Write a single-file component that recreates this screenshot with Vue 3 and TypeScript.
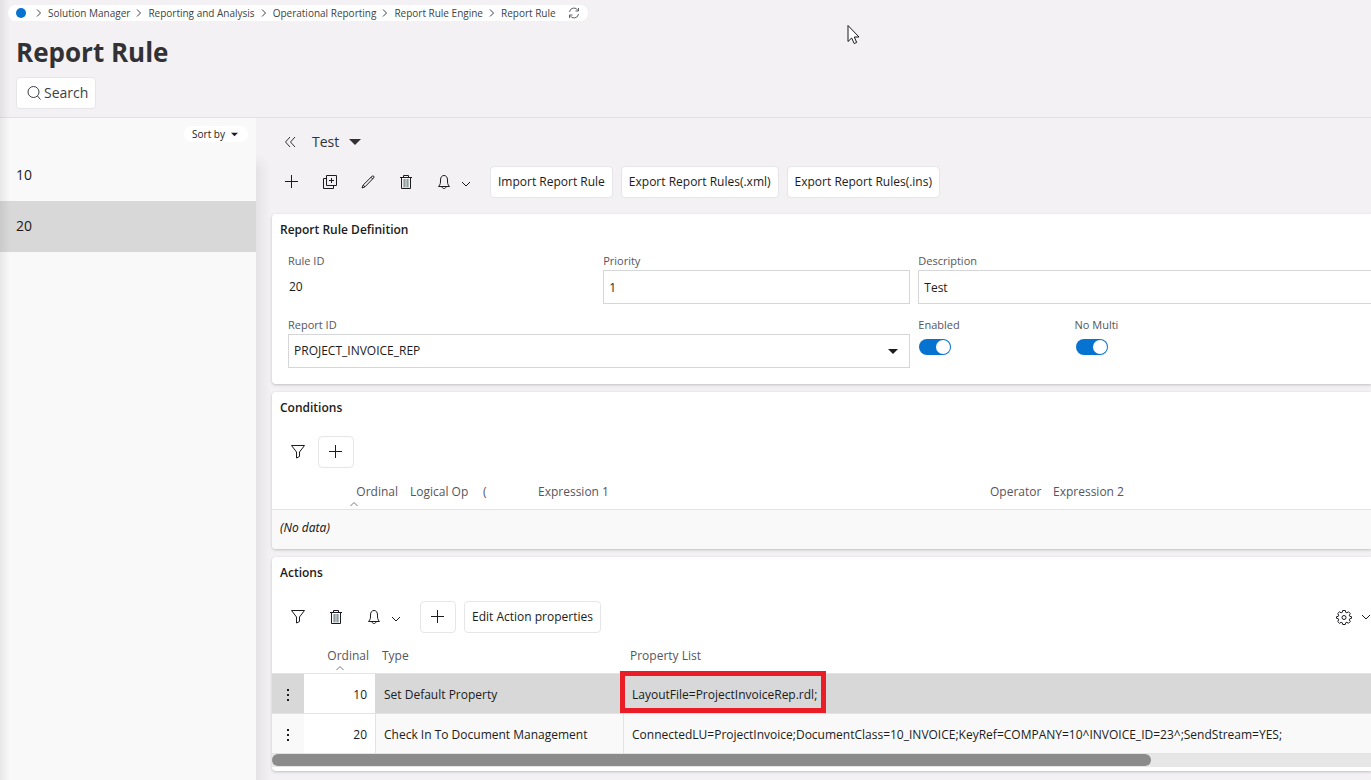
<script setup lang="ts">
import { ref } from 'vue'

interface ActionRow {
  ordinal: number
  type: string
  properties: string
}

const crumbs = ['Solution Manager', 'Reporting and Analysis', 'Operational Reporting', 'Report Rule Engine', 'Report Rule']
const rules = [10, 20]
const selectedRule = ref(20)
const priority = ref('1')
const description = ref('Test')
const reportId = ref('PROJECT_INVOICE_REP')
const enabled = ref(true)
const noMulti = ref(true)

const actions: ActionRow[] = [
  { ordinal: 10, type: 'Set Default Property', properties: 'LayoutFile=ProjectInvoiceRep.rdl;' },
  {
    ordinal: 20,
    type: 'Check In To Document Management',
    properties: 'ConnectedLU=ProjectInvoice;DocumentClass=10_INVOICE;KeyRef=COMPANY=10^INVOICE_ID=23^;SendStream=YES;',
  },
]
const selectedAction = ref(10)
</script>

<template>
  <div class="page">
    <svg class="defs" aria-hidden="true">
      <symbol id="i-plus" viewBox="0 0 16 16"><path d="M7.500 1v13M1 7.500h13" /></symbol>
      <symbol id="i-trash" viewBox="0 0 16 16">
        <path d="M5 5h6v8.500H5z" class="fillsoft" />
        <path d="M2 3.500h12M5.500 3.500v-2h5v2M3.500 3.500v11h9v-11" />
        <path d="M6.500 5v8M9.500 5v8" class="soft" />
      </symbol>
      <symbol id="i-bell" viewBox="0 0 16 16">
        <path d="M2.500 12.500C4.500 10.500 4.500 9 4.500 6 4.500 3 6 1.500 8 1.500s3.500 1.500 3.500 4.500c0 3 0 4.500 2 6.500zM6 12.500c0 2.700 4 2.700 4 0" />
      </symbol>
      <symbol id="i-filter" viewBox="0 0 16 16"><path d="M1.500 1.500h13L9.500 8v4.500l-3 1.500V8z" /></symbol>
      <symbol id="i-down" viewBox="0 0 10 10"><path d="M1 3l4 4 4-4" /></symbol>
      <symbol id="i-right" viewBox="0 0 10 10"><path d="M3 1.500L6.500 5 3 8.500" /></symbol>
      <symbol id="i-up" viewBox="0 0 10 10"><path d="M1.500 7L5 3.500 8.500 7" /></symbol>
      <symbol id="i-caret" viewBox="0 0 12 6"><path d="M0 0h12L6 6z" class="solid" /></symbol>
    </svg>

    <header class="head">
      <nav class="crumbs" aria-label="Breadcrumb">
        <a class="home" href="#" aria-label="Home"></a>
        <template v-for="crumb in crumbs" :key="crumb">
          <svg class="sep"><use href="#i-right" /></svg>
          <a href="#">{{ crumb }}</a>
        </template>
        <button class="refresh" type="button" aria-label="Refresh">
          <svg viewBox="0 0 12 12">
            <path d="M1.500 5A4.500 4.500 0 0 1 10 3.500M10.500 1v3H7.500M10.500 7A4.500 4.500 0 0 1 2 8.500M1.500 11V8h3" />
          </svg>
        </button>
      </nav>
      <h1>Report Rule</h1>
      <button class="btn search" type="button">
        <svg viewBox="0 0 16 16"><circle cx="7.500" cy="7" r="5.500" /><path d="M11.500 11l3 3.500" /></svg>
        Search
      </button>
    </header>

    <div class="body">
      <aside class="side">
        <div class="sortbar">
          <button class="sort" type="button">Sort by <svg><use href="#i-caret" /></svg></button>
        </div>
        <button
          v-for="rule in rules"
          :key="rule"
          type="button"
          class="rule"
          :class="{ active: rule === selectedRule }"
          @click="selectedRule = rule"
        >
          {{ rule }}
        </button>
      </aside>

      <main class="content">
        <div class="record">
          <button class="collapse" type="button" aria-label="Collapse list">
            <svg viewBox="0 0 12 12"><path d="M6 1L1.500 6 6 11M11 1L6.500 6 11 11" /></svg>
          </button>
          <button class="current" type="button">Test <svg><use href="#i-caret" /></svg></button>
        </div>

        <div class="tools top">
          <button class="icon" type="button" aria-label="New"><svg><use href="#i-plus" /></svg></button>
          <button class="icon" type="button" aria-label="Duplicate">
            <svg viewBox="0 0 16 16"><path d="M4.500 1.500h10v10h-10zM4.500 4.500h-3v10h10v-3M9.500 4v5M7 6.500h5" /></svg>
          </button>
          <button class="icon" type="button" aria-label="Edit">
            <svg viewBox="0 0 16 16"><path d="M2 14l1.200-3L12 2.300q1-.8 1.700-.1t-.1 1.700L5 12.800zM11 3.300l1.700 1.700M3.200 11l1.800 1.800" /></svg>
          </button>
          <button class="icon" type="button" aria-label="Delete"><svg><use href="#i-trash" /></svg></button>
          <button class="icon wide" type="button" aria-label="Notifications">
            <svg><use href="#i-bell" /></svg><svg class="chev"><use href="#i-down" /></svg>
          </button>
          <button class="btn" type="button">Import Report Rule</button>
          <button class="btn" type="button">Export Report Rules(.xml)</button>
          <button class="btn" type="button">Export Report Rules(.ins)</button>
        </div>

        <section class="panel">
          <h2>Report Rule Definition</h2>
          <div class="fields">
            <div class="field">
              <span class="label">Rule ID</span>
              <output class="static">20</output>
            </div>
            <div class="field">
              <label for="priority">Priority</label>
              <input id="priority" v-model="priority" type="text" class="box" />
            </div>
            <div class="field">
              <label for="description">Description</label>
              <input id="description" v-model="description" type="text" class="box" />
            </div>
            <div class="field span">
              <label for="report">Report ID</label>
              <div class="selectwrap">
                <select id="report" v-model="reportId" class="box">
                  <option>PROJECT_INVOICE_REP</option>
                </select>
                <svg><use href="#i-caret" /></svg>
              </div>
            </div>
            <div class="toggles">
              <div class="field">
                <label for="enabled">Enabled</label>
                <input id="enabled" v-model="enabled" type="checkbox" class="toggle" />
              </div>
              <div class="field">
                <label for="multi">No Multi</label>
                <input id="multi" v-model="noMulti" type="checkbox" class="toggle" />
              </div>
            </div>
          </div>
        </section>

        <section class="panel">
          <h2>Conditions</h2>
          <div class="tools inner">
            <button class="icon" type="button" aria-label="Filter"><svg><use href="#i-filter" /></svg></button>
            <button class="btn square" type="button" aria-label="Add condition"><svg><use href="#i-plus" /></svg></button>
          </div>
          <table class="conditions">
            <colgroup>
              <col class="w-ord" /><col class="w-log" /><col class="w-par" /><col class="w-exp" /><col class="w-op" /><col />
            </colgroup>
            <thead>
              <tr>
                <th class="num">Ordinal<svg class="sorted left"><use href="#i-up" /></svg></th>
                <th>Logical Op</th>
                <th>(</th>
                <th>Expression 1</th>
                <th>Operator</th>
                <th>Expression 2</th>
              </tr>
            </thead>
            <tbody>
              <tr><td class="empty" colspan="6">(No data)</td></tr>
            </tbody>
          </table>
        </section>

        <section class="panel">
          <h2>Actions</h2>
          <div class="tools inner">
            <button class="icon" type="button" aria-label="Filter"><svg><use href="#i-filter" /></svg></button>
            <button class="icon" type="button" aria-label="Delete"><svg><use href="#i-trash" /></svg></button>
            <button class="icon wide" type="button" aria-label="Notifications">
              <svg><use href="#i-bell" /></svg><svg class="chev"><use href="#i-down" /></svg>
            </button>
            <button class="btn square" type="button" aria-label="Add action"><svg><use href="#i-plus" /></svg></button>
            <button class="btn" type="button">Edit Action properties</button>
            <button class="icon settings" type="button" aria-label="Settings">
              <svg viewBox="0 0 16 16">
                <path d="M6.700 1.500h2.600l.4 1.800 1.200.5 1.600-1 1.800 1.800-1 1.600.5 1.200 1.700.3v1.600l-1.700.4-.5 1.200 1 1.600-1.800 1.800-1.600-1-1.200.5-.4 1.700H6.700l-.4-1.700-1.200-.5-1.600 1-1.800-1.800 1-1.600-.5-1.200-1.700-.4V7.700l1.700-.3.500-1.200-1-1.600 1.800-1.800 1.600 1 1.200-.5z" />
                <circle cx="8" cy="8.500" r="2" />
              </svg>
              <svg class="chev"><use href="#i-down" /></svg>
            </button>
          </div>
          <table class="actions">
            <colgroup><col class="w-menu" /><col class="w-num" /><col class="w-type" /><col /></colgroup>
            <thead>
              <tr>
                <th></th>
                <th class="num">Ordinal<svg class="sorted"><use href="#i-up" /></svg></th>
                <th>Type</th>
                <th>Property List</th>
              </tr>
            </thead>
            <tbody>
              <tr v-for="row in actions" :key="row.ordinal" :class="{ picked: row.ordinal === selectedAction }">
                <td class="menu">
                  <button type="button" aria-label="Row menu">
                    <svg viewBox="0 0 4 14"><path d="M1 1h2v2H1zM1 6h2v2H1zM1 11h2v2H1z" class="solid" /></svg>
                  </button>
                </td>
                <td class="num">{{ row.ordinal }}</td>
                <td>{{ row.type }}</td>
                <td class="props">
                  <span :class="{ marked: row.ordinal === selectedAction }">{{ row.properties }}</span>
                </td>
              </tr>
            </tbody>
          </table>
          <div class="scroll"><div class="thumb"></div></div>
        </section>
      </main>
    </div>

    <svg class="pointer" viewBox="0 0 13 20" aria-hidden="true">
      <path d="M1 1v16l3.700-3.500L7.200 19l2.500-1-2.400-5.500H12z" />
    </svg>
  </div>
</template>

<style>
body {
  margin: 0;
  background: #f3f1f4;
}
</style>

<style scoped>
.page {
  position: relative;
  display: flex;
  flex-direction: column;
  min-height: 100vh;
  overflow: hidden;
  font-family: "Open Sans", sans-serif;
  font-size: 12px;
  line-height: 16px;
  color: #1b1b20;
}
.page::before {
  content: "";
  position: absolute;
  z-index: 2;
  inset: 0 auto 0 0;
  width: 10px;
  background: linear-gradient(to right, rgba(0, 0, 0, 0.07), transparent);
  pointer-events: none;
}
.page *,
.page *::before {
  box-sizing: border-box;
}
.defs {
  position: absolute;
  width: 0;
  height: 0;
}
svg {
  width: 16px;
  height: 16px;
  flex: none;
  fill: none;
  stroke: currentColor;
}
.solid {
  fill: currentColor;
  stroke: none;
}
.soft {
  stroke: #8c9a9c;
}
.fillsoft {
  fill: #b4bfc0;
  stroke: none;
}
button {
  margin: 0;
  padding: 0;
  border: 0;
  background: none;
  font: inherit;
  color: inherit;
}
.head {
  height: 118px;
  padding: 5px 8px 0;
  border-bottom: 1px solid #e2e1e4;
}
.crumbs {
  display: flex;
  align-items: center;
  width: max-content;
  height: 16px;
  padding: 0 8px;
  border-radius: 8px;
  background: #fff;
  font-size: 10px;
  line-height: 14px;
  color: #3b4248;
}
.crumbs a {
  color: inherit;
  text-decoration: none;
}
.crumbs .home {
  width: 10px;
  height: 10px;
  margin-right: 4px;
  border-radius: 50%;
  background: #0673d1;
}
.sep {
  width: 10px;
  height: 10px;
  margin: 0 4px;
}
.refresh {
  display: flex;
  margin-left: 12px;
}
.refresh svg {
  width: 12px;
  height: 12px;
  color: #5a6066;
}
h1 {
  margin: 13px 8px 6px;
  font-size: 26px;
  line-height: 37px;
  font-weight: 700;
  color: #323136;
}
.btn {
  display: flex;
  align-items: center;
  justify-content: center;
  height: 32px;
  padding: 0 7px;
  border: 1px solid #e6e5e8;
  border-radius: 4px;
  background: #fff;
  white-space: nowrap;
}
.search {
  gap: 2px;
  margin-left: 8px;
  padding: 0 7px 0 9px;
  font-size: 14px;
  color: #3a3f45;
}
.body {
  display: flex;
  flex: 1;
}
.side {
  position: relative;
  width: 256px;
  flex: none;
  background: #f9f9f9;
}
.side::before {
  content: "";
  position: absolute;
  inset: 36px -14px 0 auto;
  width: 14px;
  background: linear-gradient(to right, rgba(0, 0, 0, 0.06), transparent);
  mask-image: linear-gradient(to bottom, transparent, #000 16px);
}
.sortbar {
  display: flex;
  justify-content: flex-end;
  height: 32px;
  padding: 8px 8px 0 0;
}
.sort {
  display: flex;
  align-items: center;
  gap: 6px;
  height: 16px;
  padding: 0 10px 0 8px;
  border-radius: 8px;
  background: #fff;
  font-size: 10px;
  line-height: 14px;
}
.sort svg {
  width: 7px;
  height: 5px;
}
.rule {
  display: block;
  width: 100%;
  height: 51px;
  padding: 0 16px 2px;
  font-size: 14px;
  text-align: left;
}
.rule.active {
  background: #d8d8d8;
}
.content {
  flex: 1;
  min-width: 0;
  padding: 8px 0 10px 16px;
}
.record {
  display: flex;
  align-items: center;
  height: 32px;
  padding-left: 12px;
  color: #323136;
}
.collapse {
  display: flex;
  margin-right: 16px;
}
.collapse svg {
  width: 12px;
  height: 12px;
}
.current {
  display: flex;
  align-items: center;
  gap: 10px;
  font-size: 14px;
  line-height: 18px;
  font-weight: 500;
}
.current svg {
  width: 12px;
  height: 6px;
}
.tools {
  display: flex;
  align-items: center;
  gap: 8px;
  height: 32px;
  margin: 8px 0 16px;
}
.tools.top {
  padding-left: 1px;
}
.icon {
  display: flex;
  align-items: center;
  justify-content: center;
  width: 38px;
  height: 32px;
  margin-right: -8px;
}
.icon.wide {
  width: 65px;
  justify-content: flex-start;
  gap: 9px;
  margin-right: 0;
  padding-left: 11px;
}
.chev {
  width: 10px;
  height: 10px;
}
.wide .chev {
  margin-top: 4px;
}
.tools .wide + .btn {
  margin-left: -8px;
}
.panel {
  margin-bottom: 8px;
  padding-top: 8px;
  border-radius: 4px 0 0 4px;
  background: #fff;
  box-shadow: 0 1px 3px rgba(0, 0, 0, 0.22);
  overflow: hidden;
}
.panel h2 {
  margin: 0 8px;
  font-size: 12px;
  line-height: 16px;
  font-weight: 600;
}
.fields {
  display: grid;
  grid-template-columns: 2fr 2fr 3fr;
  gap: 14px 8px;
  margin: 16px -8px 16px 16px;
}
.field {
  display: flex;
  flex-direction: column;
  min-width: 0;
}
.span {
  grid-column: span 2;
}
.field label,
.label {
  margin-bottom: 2px;
  font-size: 11px;
  line-height: 14px;
  color: #55565c;
}
.static {
  padding: 9px 1px;
}
.box {
  width: 100%;
  height: 34px;
  padding: 0 5px;
  border: 1px solid #d6d6d8;
  border-radius: 0;
  background: #fff;
  font: inherit;
  color: inherit;
  appearance: none;
}
.selectwrap {
  display: grid;
  align-items: center;
}
.selectwrap > * {
  grid-area: 1 / 1;
}
.selectwrap svg {
  width: 10px;
  height: 5px;
  margin-right: 12px;
  justify-self: end;
  pointer-events: none;
}
.toggles {
  display: grid;
  grid-template-columns: repeat(3, 1fr);
  gap: 8px;
}
.toggle {
  display: flex;
  justify-content: flex-end;
  width: 32px;
  height: 16px;
  margin: 5px 1px;
  padding: 1px;
  border-radius: 8px;
  background: #0673d1;
  appearance: none;
}
.toggle::before {
  content: "";
  width: 14px;
  height: 14px;
  border-radius: 50%;
  background: #fff;
}
.toggle:not(:checked) {
  justify-content: flex-start;
  background: #8c8c8c;
}
.tools.inner {
  margin: 20px 0 8px 7px;
}
.tools .square {
  width: 36px;
  padding: 0;
}
.icon + .square {
  margin-left: 1px;
}
.settings {
  width: auto;
  gap: 9px;
  margin-left: auto;
  margin-right: 0;
}
table {
  width: 100%;
  border-collapse: separate;
  border-spacing: 0;
  table-layout: fixed;
}
th {
  position: relative;
  height: 33px;
  padding: 0 6px 2px;
  font-weight: 400;
  text-align: left;
  color: #55565c;
  border-bottom: 1px solid #e3e3e5;
  white-space: nowrap;
}
th.num {
  text-align: right;
}
.actions th.num {
  padding-right: 7px;
}
.sorted {
  position: absolute;
  bottom: 0;
  left: 31px;
  width: 10px;
  height: 10px;
  color: #77787c;
}
.sorted.left {
  left: 77px;
}
.conditions th {
  height: 34px;
}
.w-ord { width: 132px; }
.w-log { width: 73px; }
.w-par { width: 55px; }
.w-exp { width: 452px; }
.w-op { width: 63px; }
.w-menu { width: 32px; }
.w-num { width: 72px; }
.w-type { width: 248px; }
td {
  height: 40px;
  padding: 2px 8px 0;
  background: #f9f9f9;
  border-right: 1px solid #e3e3e5;
  border-bottom: 1px solid #e3e3e5;
}
td.empty {
  height: 39px;
  padding: 0 8px 4px;
  font-family: "Noto Sans", "Open Sans", sans-serif;
  font-style: italic;
  border: 0;
}
td.num {
  text-align: right;
  background: #fff;
}
.picked td {
  background: #d8d8d8;
  border-right-color: #d8d8d8;
}
.picked td.num {
  background: #fff;
}
td.menu {
  padding: 2px 0 0;
  border-right: 0;
}
.menu button {
  display: flex;
  width: 100%;
  justify-content: center;
}
.menu svg {
  width: 4px;
  height: 14px;
}
td.props {
  white-space: nowrap;
  border-right: 0;
}
.marked {
  position: relative;
}
.marked::after {
  content: "";
  position: absolute;
  inset: -15px -9px -10px -12px;
  border: 5px solid #ea1c26;
}
.scroll {
  height: 13px;
  margin-bottom: 4px;
  background: #e6e6e6;
}
.thumb {
  width: 80%;
  height: 12px;
  border-radius: 6px;
  background: #8b8b8b;
}
.pointer {
  position: absolute;
  top: 24px;
  left: 847px;
  width: 13px;
  height: 21px;
  fill: #fff;
  stroke: #18181c;
}
</style>
